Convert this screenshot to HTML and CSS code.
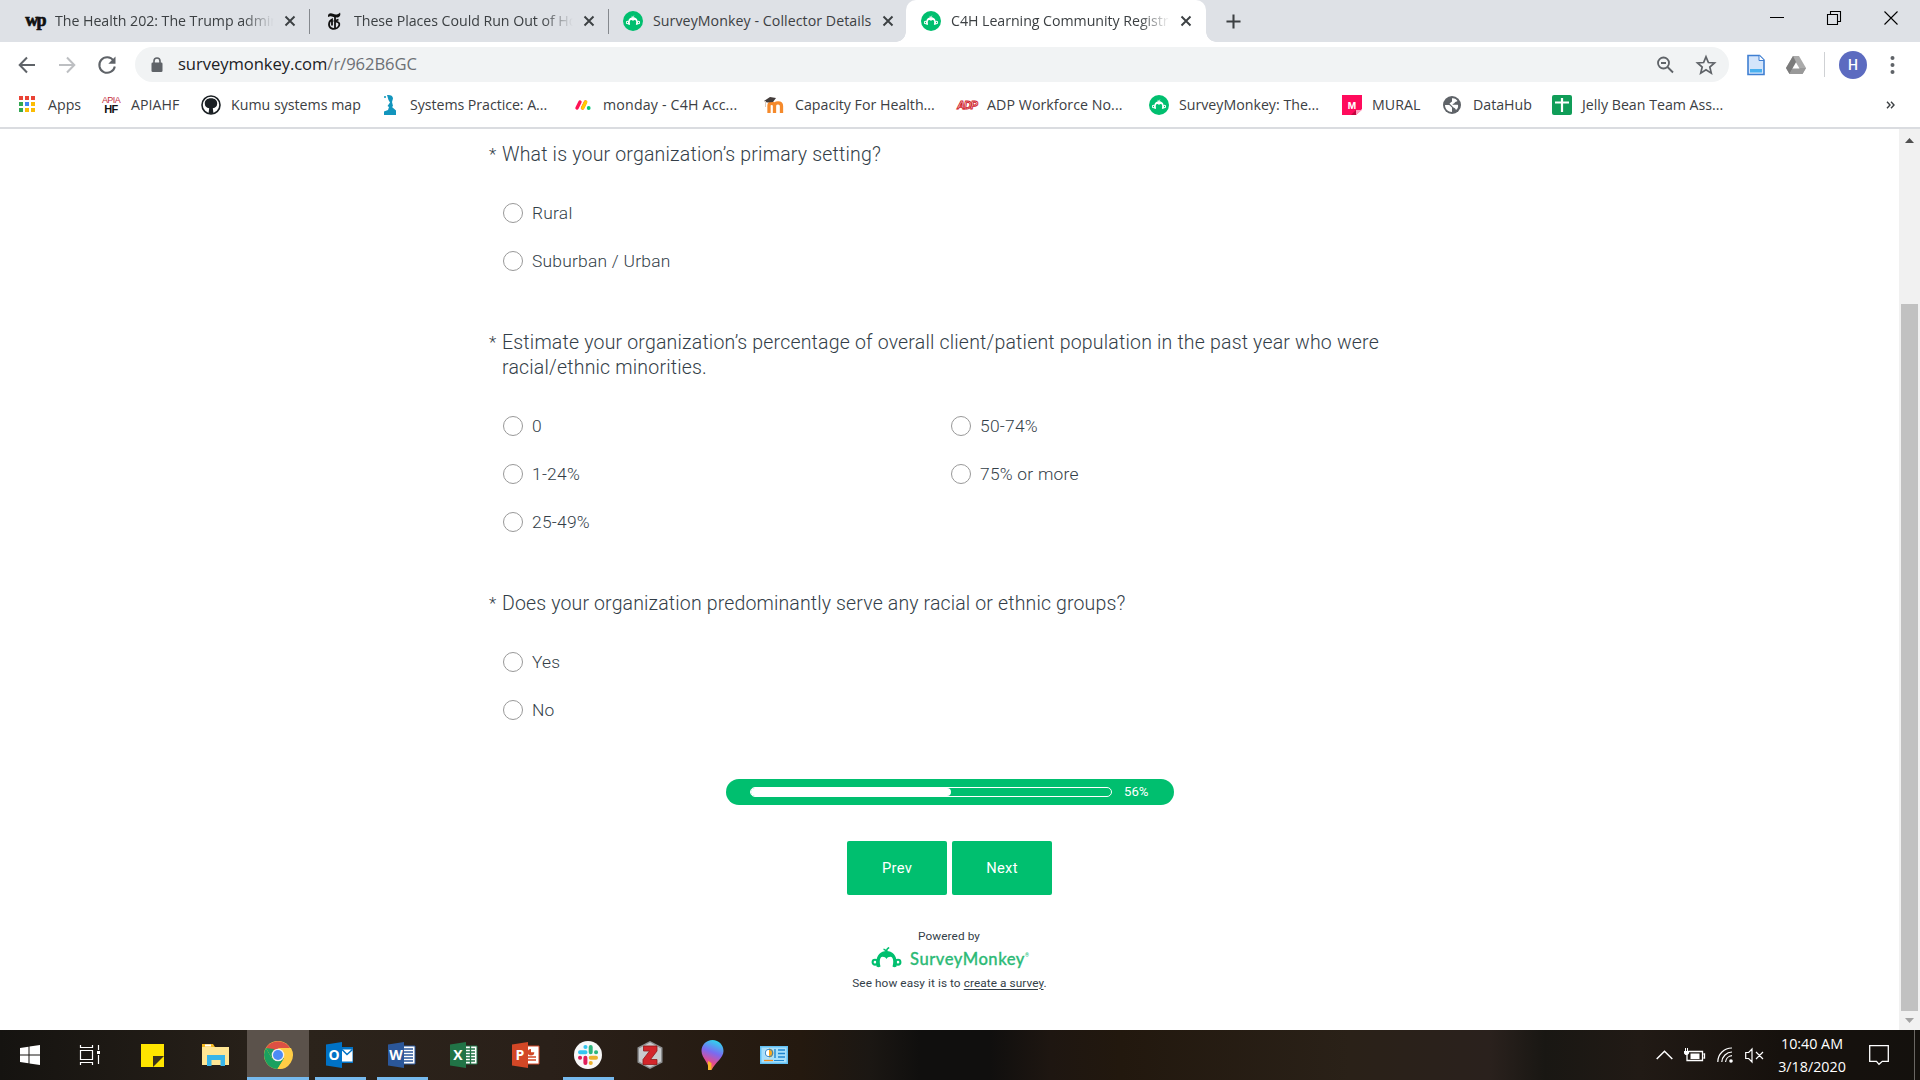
FILE: index.html
```html
<!DOCTYPE html>
<html lang="en">
<head>
<meta charset="utf-8">
<title>C4H Learning Community Registration</title>
<link rel="stylesheet" href="styles.css">
</head>
<body>
<svg class="defs" width="0" height="0">
  <symbol id="monkey" viewBox="0 0 30 21">
    <path fill="currentColor" d="M5 19.5C3.6 9 8.500 4 15 4s11.400 5 10 15.500q-2 1.600-4 0C22.600 14 21.500 9.800 18.800 9.800c-1.800 0-3 .8-3.800 2.200-.8-1.400-2-2.200-3.800-2.200C8.500 9.800 7.400 14 9 19.500q-2 1.600-4 0z"/>
    <path fill="none" stroke="currentColor" stroke-width="1.500" d="M15 5.500c-.3-2-1.300-3-3-3.200M15 5c0-2.200.8-3.700 2.700-4.400"/>
    <circle cx="3.500" cy="15.200" r="2.400" fill="none" stroke="currentColor" stroke-width="2.100"/>
    <circle cx="26.500" cy="15.200" r="2.400" fill="none" stroke="currentColor" stroke-width="2.100"/>
  </symbol>
  <symbol id="sm" viewBox="0 0 20 20"><circle cx="10" cy="10" r="10" fill="#00bf6f"/><svg x="2.800" y="4" width="14.400" height="10.500" viewBox="0 0 30 21" color="#fff"><use href="#monkey"/></svg></symbol>
  <symbol id="close" viewBox="0 0 12 12"><path d="M1.500 1.500l9 9M10.500 1.500l-9 9" stroke="#3c4043" stroke-width="1.900" fill="none"/></symbol>
</svg>

<header class="tabs">
  <div class="tab"><span class="fav wp">wp</span><span class="tab-title">The Health 202: The Trump admin</span><svg class="x"><use href="#close"/></svg></div>
  <div class="tab"><span class="fav nyt"><svg width="14" height="18" viewBox="0 0 14 18"><path d="M1 5C.5 1 4 .6 6 1.800S11 3 13 .5c1.200 3.500-1 5-3 5C7 5.500 4 3.500 2.500 4.500" fill="#111"/><path d="M8 4v12M11.500 7.500L8 9l3.500 1.500c1.500 1 1 4.300-1.500 5.500-4 1.800-8 .3-8-3.500C2 10 3 8.500 5 7.500v6" stroke="#111" stroke-width="1.800" fill="none"/></svg></span><span class="tab-title">These Places Could Run Out of Ho</span><svg class="x"><use href="#close"/></svg></div>
  <div class="tab last"><svg class="fav"><use href="#sm"/></svg><span class="tab-title">SurveyMonkey - Collector Details</span><svg class="x"><use href="#close"/></svg></div>
  <div class="tab active"><svg class="fav"><use href="#sm"/></svg><span class="tab-title">C4H Learning Community Registr</span><svg class="x"><use href="#close"/></svg></div>
  <svg class="plus" viewBox="0 0 16 16"><path d="M8 .5v15M.5 8h15" stroke="#3c4043" stroke-width="2.200"/></svg>
  <div class="winbtns">
    <svg width="14" height="14"><path d="M0 6.500h14" stroke="#000"/></svg>
    <svg width="14" height="14"><path d="M.5 3.500h10v10h-10zM3.500 3V.5h10v10H11" fill="none" stroke="#000" stroke-width="1.100"/></svg>
    <svg width="14" height="14"><path d="M.5.5l13 13M13.500.5l-13 13" stroke="#000" stroke-width="1.100"/></svg>
  </div>
</header>

<nav class="toolbar">
  <svg class="back" width="18" height="18"><path d="M17 9H2M9 1.500L1.700 9 9 16.500" fill="none" stroke="#5f6368" stroke-width="2"/></svg>
  <svg class="fwd" width="18" height="18"><path d="M1 9h15M9 1.500L16.300 9 9 16.500" fill="none" stroke="#bdbfc2" stroke-width="2"/></svg>
  <svg class="reload" width="20" height="20"><path d="M16.500 5.500A7.800 7.800 0 1 0 17.800 11.500" fill="none" stroke="#5f6368" stroke-width="2"/><path d="M18.500 1.500v7.200h-7.200z" fill="#5f6368"/></svg>
  <div class="url">
    <svg class="lock" width="12" height="16"><path d="M3 6V4a3 3 0 0 1 6 0v2" fill="none" stroke="#5f6368" stroke-width="1.600"/><rect x=".5" y="5.500" width="11" height="9.500" rx="1.300" fill="#5f6368"/></svg>
    <span class="address">surveymonkey.com<i>/r/962B6GC</i></span>
    <svg class="mag" width="18" height="18"><circle cx="7.500" cy="7" r="5.500" fill="none" stroke="#5f6368" stroke-width="1.800"/><path d="M5 7h5M11.500 11l5.500 5.500" stroke="#5f6368" stroke-width="1.900"/></svg>
    <svg class="star" width="20" height="20"><path d="M10 1.800l2.400 5.700 6.100.5-4.700 4 1.500 6.100L10 14.800l-5.300 3.300L6.200 12 1.500 8l6.100-.5z" fill="none" stroke="#5f6368" stroke-width="1.700"/></svg>
  </div>
  <svg class="doc" width="18" height="22"><path d="M1 1.500h11.500L17 6v14.500H1z" fill="#d4e5fb" stroke="#3f7fd2" stroke-width="1.600"/><path d="M12 1.500V6.500h5" fill="#fff" stroke="#3f7fd2"/><path d="M3 15h12v3.500H3z" fill="#4ab0ef"/></svg>
  <svg class="drive" width="20" height="18"><path d="M7 0h6l7 12-3.500 6h-13L0 12z" fill="#aaa"/><path d="M7 0L0 12l3.500 6L10 6z" fill="#7b7b7b"/><path d="M6.800 12H20l-3.500 6h-13z" fill="#999"/><path d="M10 6.500L6.500 12.500h7z" fill="#fff"/></svg>
  <span class="sep"></span>
  <span class="avatar">H</span>
  <svg class="dots" width="5" height="20"><circle cx="2.500" cy="3" r="2"/><circle cx="2.500" cy="10" r="2"/><circle cx="2.500" cy="17" r="2"/></svg>
</nav>

<nav class="bookmarks">
  <a class="b1"><svg class="apps" width="17" height="17"><path fill="#ea4335" d="M0 0h4v4H0zM6 0h4v4H6zM12 0h4v4h-4z"/><path fill="#34a853" d="M0 6h4v4H0zM0 12h4v4H0z"/><path fill="#4285f4" d="M6 6h4v4H6z"/><path fill="#fbbc04" d="M12 6h4v4h-4zM6 12h4v4H6zM12 12h4v4h-4z"/></svg>Apps</a>
  <a class="b2"><span class="apia"><em>APIA</em><b>HF</b></span>APIAHF</a>
  <a class="b3"><svg width="20" height="20"><circle cx="10" cy="10" r="9" fill="#fff" stroke="#1b2024" stroke-width="1.600"/><path d="M10 3.300c4 0 6.200 2.200 6.200 5.200 0 2.800-1.700 4.500-4.400 4.800l.7 5.500h-5l.7-5.500C5.500 13 3.800 11.300 3.800 8.500c0-3 2.200-5.200 6.200-5.200z" fill="#1b2024"/></svg>Kumu systems map</a>
  <a class="b4"><svg width="14" height="20"><path d="M4 0c3-.5 6 .5 6 3.500L9 7l1 4-1 1 4 3.500V20H1v-3.500L5 15l1-3-1.500-1L7 7.500 5.500 5z" fill="#1295bd"/><path d="M1 1h2v2H1z" fill="#46b0cd"/></svg>Systems Practice: A...</a>
  <a class="b5"><svg width="16" height="12"><path d="M2 9L5 3M7.500 9l3-6" stroke-width="3.400" stroke-linecap="round" stroke="#ff1255"/><path d="M7.700 9l3-6" stroke-width="3.400" stroke-linecap="round" stroke="#ffcb00"/><circle cx="13.700" cy="9" r="1.900" fill="#00c875"/></svg>monday - C4H Acc...</a>
  <a class="b6"><svg width="21" height="18"><path d="M5 17V9.500c0-3 5-3 5.500 0V17M10.500 17V9.500c.5-3.500 7-3.500 7 .5v7" fill="none" stroke="#f58a2c" stroke-width="3.300"/><path d="M0 5l6-4 6 1-3 4-6 .5z" fill="#433c3b"/><path d="M1.500 5v6" stroke="#d8c8bc"/></svg>Capacity For Health...</a>
  <a class="b7"><span class="adp">ADP</span>ADP Workforce No...</a>
  <a class="b8"><svg width="20" height="20"><use href="#sm"/></svg>SurveyMonkey: The...</a>
  <a class="b9"><svg width="20" height="20"><path d="M0 0h20v14l-6 6H0z" fill="#ff0b5c"/><path d="M14 20v-5h6z" fill="#ff9cbe"/><path d="M9 20l5-5v5z" fill="#c1053f"/><text x="10" y="14" text-anchor="middle" class="mural">M</text></svg>MURAL</a>
  <a class="b10"><svg width="18" height="18"><circle cx="9" cy="9" r="9" fill="#5f6368"/><path d="M2 9h4c1.500.5 2 2 3 2.500V16C5 16 2 13 2 9zM9 2.200c2.500-.3 4.500 1 5.500 2.800-1 1-2.500.5-3 2-.5 1-2 .5-2 1.500 1.500 1 4-.5 5.500.5.500 2-.5 4-2 5-.5-1-1-2-2.500-2.500L8 9 6.500 7.500 9 5.500z" fill="#fff"/></svg>DataHub</a>
  <a class="b11"><svg width="20" height="20"><rect width="20" height="20" rx="2" fill="#109d58"/><path d="M10 3v14M3 7.500h14" stroke="#fff" stroke-width="2.200"/></svg>Jelly Bean Team Ass...</a>
  <a class="more"><svg width="9" height="8"><path d="M1 .8L4 4 1 7.200M5 .8L8 4 5 7.200" fill="none" stroke="#3c4043" stroke-width="1.400"/></svg></a>
</nav>

<main class="view">
  <form class="survey">
    <section class="q q1">
      <h2><span class="req">*</span>What is your organization’s primary setting?</h2>
      <div class="opts"><label><span class="radio"></span>Rural</label><label><span class="radio"></span>Suburban / Urban</label></div>
    </section>
    <section class="q q2">
      <h2><span class="req">*</span>Estimate your organization’s percentage of overall client/patient population in the past year who were<br>racial/ethnic minorities.</h2>
      <div class="cols">
        <div class="opts"><label><span class="radio"></span>0</label><label><span class="radio"></span>1-24%</label><label><span class="radio"></span>25-49%</label></div>
        <div class="opts"><label><span class="radio"></span>50-74%</label><label><span class="radio"></span>75% or more</label></div>
      </div>
    </section>
    <section class="q q3">
      <h2><span class="req">*</span>Does your organization predominantly serve any racial or ethnic groups?</h2>
      <div class="opts"><label><span class="radio"></span>Yes</label><label><span class="radio"></span>No</label></div>
    </section>
    <div class="progress"><span class="track"><span class="fill" style="width:56%"></span></span><span class="pct">56%</span></div>
    <div class="buttons"><span class="btn">Prev</span><span class="btn">Next</span></div>
    <footer class="powered">
      <div class="pw">Powered by</div>
      <div class="logo"><svg width="31" height="21"><use href="#monkey"/></svg><span>SurveyMonkey</span><sup>®</sup></div>
      <div class="see">See how easy it is to <u>create a survey</u>.</div>
    </footer>
  </form>
  <aside class="scroll"><svg width="9" height="5"><path d="M0 5L4.500 0 9 5z" fill="#505050"/></svg><span class="thumb"></span><svg width="9" height="5"><path d="M0 0l4.500 5L9 0z" fill="#a3a3a3"/></svg></aside>
</main>

<footer class="taskbar">
  <div class="task"><svg width="20" height="20"><path fill="#fff" d="M0 3l8.500-1.300v7.800H0zM9.500 1.500L20 0v9.500H9.500zM0 10.500h8.500v7.800L0 17zM9.500 10.500H20V20L9.500 18.500z"/></svg></div>
  <div class="task"><svg width="20" height="20"><path d="M.5 5.500h12v9H.5zM.5 0v2.500h12V0M.5 20v-2.500h12V20M18.500 0v5M18.500 10v9" fill="none" stroke="#fff" stroke-width="1.200"/><path d="M17 6h3v3h-3z" fill="#fff"/></svg></div>
  <div class="task wide"><svg width="23" height="23"><path fill="#ffe500" d="M0 0h23v23H0z"/><path d="M12 23V12h11v11z" fill="#2b2418"/><path d="M12 23V12h11z" fill="#3a321c"/><path d="M23 12v11H12z" fill="#ffe500"/></svg></div>
  <div class="task"><svg width="28" height="24"><path d="M0 1h11l2 3H0z" fill="#f5b921"/><path d="M0 4h27v18H0z" fill="#ffe694"/><path d="M3 1.500h6v2H3z" fill="#fff"/><path d="M5 23V12h18v11h-4.500v-6h-9v6z" fill="#38b5e9"/></svg></div>
  <div class="task on"><svg width="28" height="28" viewBox="0 0 28 28"><circle cx="14" cy="14" r="14" fill="#ffcd46"/><path d="M14 14L2 7A14 14 0 0 1 26 7H14z" fill="#dd5144"/><path d="M1.900 7A14 14 0 0 0 13.500 28L20 17.500 14 14 8 17.500z" fill="#1aa15f"/><path d="M1.900 7L8 17.500 10 8z" fill="#1aa15f"/><path d="M10 7h16l-6 6z" fill="#dd5144"/><path d="M14 7h13a14 14 0 0 1-13.500 21L20 17.500z" fill="#ffcd46"/><circle cx="14" cy="14" r="6.300" fill="#f1f1f1"/><circle cx="14" cy="14" r="5" fill="#4c8bf5"/></svg></div>
  <div class="task run"><svg width="28" height="28"><path d="M15 6h12v16H15z" fill="#0072c6"/><path d="M16 8.500h10.500v12H16z" fill="#fff"/><path d="M16 8.500l5 5 5.500-5" fill="none" stroke="#0072c6" stroke-width="1.500"/><path d="M0 3.500L16 1v26L0 24.500z" fill="#0072c6"/><text x="8" y="19" class="ol">O</text></svg></div>
  <div class="task run"><svg width="28" height="28"><path d="M15 5h12v18H15z" fill="#fff" stroke="#2b579a"/><path d="M16 8h9M16 11h9M16 14h9M16 17h9M16 20h9" stroke="#2b579a" stroke-width="1.300"/><path d="M0 3.500L16 1v26L0 24.500z" fill="#2b579a"/><text x="8" y="19" class="ol">W</text></svg></div>
  <div class="task"><svg width="28" height="28"><path d="M15 5h12v18H15z" fill="#fff" stroke="#217346"/><path d="M16 8h9M16 11h9M16 14h9M16 17h9M16 20h9M20.500 5v18" stroke="#217346" stroke-width="1.300"/><path d="M0 3.500L16 1v26L0 24.500z" fill="#217346"/><text x="8" y="19" class="ol">X</text></svg></div>
  <div class="task"><svg width="28" height="28"><path d="M15 5h12v18H15z" fill="#fff" stroke="#d24726"/><path d="M16 16h8M16 19h8" stroke="#d24726" stroke-width="1.400"/><path d="M19 8a3.300 3.300 0 1 0 3.300 3.300H19z" fill="#d24726"/><path d="M0 3.500L16 1v26L0 24.500z" fill="#d24726"/><text x="8" y="19" class="ol">P</text></svg></div>
  <div class="task run"><svg width="28" height="28"><circle cx="14" cy="14" r="14" fill="#f8f8f8"/><g stroke-width="4" stroke-linecap="round"><path d="M6 11.300h5.500M11.400 6h.1" stroke="#36c5f0"/><path d="M16.700 6v5.300M22 11.300h.1" stroke="#2eb67d"/><path d="M22 16.700h-5.300M16.700 22h.1" stroke="#ecb22e"/><path d="M11.400 22v-5.300M6 16.700h.1" stroke="#e01e5a"/></g></svg></div>
  <div class="task"><svg width="26" height="28"><path d="M13 0l12.500 6.500v15L13 28 .5 21.500v-15z" fill="#8e9092"/><path d="M13 1.500l11 6v13L13 26.500 2 20.500v-13z" fill="#c9cbcd"/><path d="M6.500 5h13.500v5l-6.500 8.500H20V23.500H6V18.500L12.500 10h-6z" fill="#d3262b" stroke="#8f1a16" stroke-width=".8"/></svg></div>
  <div class="task"><svg width="23" height="30"><defs><linearGradient id="p" x1=".6" y1="0" x2=".3" y2="1"><stop offset="0" stop-color="#2fd4ee"/><stop offset=".4" stop-color="#7a6bf0"/><stop offset=".75" stop-color="#e84a8c"/><stop offset="1" stop-color="#f7a02c"/></linearGradient></defs><path d="M11.500 0C18 0 22.500 5 22.500 11c0 7-8 11-12 19h-3c1-7-7-12-7-19 0-6 4.500-11 11-11z" fill="url(#p)"/><path d="M7 21l3.500 2-.5 7H7z" fill="#f7b52c"/></svg></div>
  <div class="task"><svg width="28" height="18"><path fill="#62c1f5" d="M0 0h28v18H0z"/><path fill="#a8e0fc" d="M1.500 1.500h25v15h-25z"/><circle cx="9" cy="7" r="4.500" fill="#fff"/><path d="M9 7V2.500A4.500 4.500 0 0 1 9 11.500z" fill="#f6a821"/><circle cx="9" cy="7" r="3.800" fill="none" stroke="#2480c8"/><path d="M18 4h7M18 7.500h7M18 11h7M15 3v9" stroke="#1f86d1" stroke-width="1.400"/><path d="M4 14.500h9" stroke="#f38b1c" stroke-width="1.300"/><path d="M14 14.500h10" stroke="#1f86d1"/></svg></div>
  <div class="tray">
    <svg width="17" height="10"><path d="M.7 9L8.500 1.200 16.300 9" fill="none" stroke="#fff" stroke-width="1.500"/></svg>
    <svg width="21" height="15"><path d="M5 4V3.500h13.500v9H3V7M19.500 6h1v4h-1" fill="none" stroke="#fff" stroke-width="1.300"/><path d="M6.500 5.500H15.500v5.500h-9zM0 3h5v2.500L3.500 7h-2L0 5.500zM1 0h1v3H1zM3 0h1v3H3z" fill="#fff"/></svg>
    <svg width="17" height="16"><g fill="none" stroke="#fff" stroke-width="1.200"><path d="M.8 15A14 14 0 0 1 15 1M4.800 15A10.500 10.500 0 0 1 15 5M8.500 15A7 7 0 0 1 15 8.700"/></g><circle cx="14" cy="14" r="1.800" fill="#fff"/></svg>
    <svg width="19" height="15"><path d="M.7 4.500h3L7 1v13l-3.300-3.500h-3zM11 4l7 7M18 4l-7 7" fill="none" stroke="#fff" stroke-width="1.200"/></svg>
    <div class="clock"><span>10:40 AM</span><span>3/18/2020</span></div>
    <svg width="20" height="20"><path d="M.7.7h18.600v15.600h-6L10 19.300l-2.500-3H.7z" fill="none" stroke="#fff" stroke-width="1.300"/></svg>
    <span class="peek"></span>
  </div>
</footer>
</body>
</html>
```
FILE: styles.css
```css
*{box-sizing:border-box}
body{margin:0;width:1920px;height:1080px;overflow:hidden;background:#fff;display:flex;flex-direction:column;font-family:"Open Sans","Noto Sans",sans-serif;font-size:14.2px;color:#3c4043}
svg{display:block;flex:none;overflow:visible}
.defs{position:absolute}
/* tab strip */
.tabs{height:42px;background:#dee1e6;display:flex;align-items:center;padding-left:10px;flex:none}
.tab{width:299px;height:42px;display:flex;align-items:center;padding:0 0 0 15px;position:relative;white-space:nowrap}
.tab::after{content:"";position:absolute;right:-1px;top:9px;width:1px;height:25px;background:#84888d}
.tab.last{width:298px}
.tab.last::after{display:none}
.fav{width:20px;height:20px;margin-right:10px;flex:none;display:flex;align-items:center;justify-content:center}
.wp{font:bold 18px "Liberation Serif",serif;letter-spacing:-1.8px;color:#111;-webkit-text-stroke:.7px #111;padding-bottom:2px}
.tab-title{width:219px;padding-bottom:2px;letter-spacing:-.04px;-webkit-mask-image:linear-gradient(90deg,#000 188px,transparent 219px)}
.last .tab-title{-webkit-mask-image:none;letter-spacing:.06px;width:221px}
.x{width:12px;height:12px;margin-left:10px}
.last .x{margin-left:8px}
.active{width:300px;background:#fff;border-radius:10px 10px 0 0}
.active::after,.active::before{content:"";position:absolute;width:10px;height:10px;top:32px;left:-10px;background:radial-gradient(circle at 0 0,transparent 9.500px,#fff 10px)}
.active::after{left:auto;right:-10px;background:radial-gradient(circle at 100% 0,transparent 9.500px,#fff 10px)}
.plus{width:15px;height:15px;margin-left:20px}
.winbtns{display:flex;gap:43px;margin-left:auto;margin-right:22px;margin-bottom:6px}
/* toolbar */
.toolbar{height:45px;display:flex;align-items:center;padding-left:18px;flex:none}
.fwd{margin-left:22px}
.reload{margin:0 18px 0 21px}
.url{width:1594px;height:35px;border-radius:18px;background:#f1f3f4;display:flex;align-items:center;margin:0;padding:0 13px 0 16px}
.address{font-size:16.6px;letter-spacing:-.06px;margin-left:15px;color:#202124;margin-right:auto;margin-bottom:2px}
.address i{font-style:normal;color:#6c7075}
.mag{margin-right:22px}
.doc{margin-left:18px}
.drive{margin-left:21px}
.sep{width:1px;height:25px;background:#cfd1d4;margin-left:18px}
.avatar{width:28px;height:28px;border-radius:50%;background:#5c6bc0;color:#fff;margin-left:14px;font:500 14px Roboto,sans-serif;display:flex;align-items:center;justify-content:center}
.dots{margin-left:23px;fill:#5f6368}
/* bookmarks */
.bookmarks{height:42px;border-bottom:2px solid #dadce0;display:flex;align-items:center;padding:0 0 5px 19px;flex:none}
.bookmarks a{display:flex;align-items:center;gap:10px;white-space:nowrap;flex:none}
.b1{width:82px}.bookmarks .b1{gap:12px}.b2{width:100px}.b3{width:182px}.b4{width:192px}.b5{width:189px}.b6{width:193px}.b7{width:192px}.b8{width:193px}.b9{width:101px}.b10{width:109px}.b11{width:200px}
.bookmarks .b4{gap:13px;letter-spacing:-.05px}.bookmarks .b5{gap:12px;letter-spacing:.18px}
.b7,.b9{letter-spacing:.06px}
.bookmarks .b10{gap:12px}
.more{margin-left:134px}
.apia{width:20px;display:flex;flex-direction:column;align-items:center;font:9px/9px "Liberation Sans",sans-serif;letter-spacing:-.6px}
.apia em{font-style:normal;color:#c22d3c}
.apia b{font-size:11px;color:#111}
.adp{width:20px;font:italic bold 11px "Liberation Sans",sans-serif;letter-spacing:-1.2px;color:#fff;-webkit-text-stroke:.9px #d0202a}
.mural{font:bold 9px Inter,sans-serif;fill:#fff}
/* survey */
.view{flex:1;display:flex;min-height:0}
.survey{width:1899px;padding:11px 0 0 502px;color:#333e48;font-family:Roboto,sans-serif;font-weight:300}
.q h2{margin:0;font-size:19.5px;font-weight:300;line-height:25px;letter-spacing:.19px;white-space:nowrap;position:relative}
.req{position:absolute;left:-13px;top:0;font-size:17px}
.opts{display:flex;flex-direction:column;gap:28px;width:448px;padding-left:1px}
.opts label{display:flex;align-items:center;gap:9px;height:20px;font-size:17.4px;letter-spacing:.24px}
.radio{width:20px;height:20px;border:1px solid #999;border-radius:50%}
.q1 h2{height:63px;padding-top:2px}
.q1 .req{top:2px}
.q1{height:189px}
.q2 h2{height:86px}
.q2{height:262px;padding-top:1px}
.q3 h2{height:61px;letter-spacing:.15px}
.q3{height:188px}
.cols{display:flex}
.progress{width:448px;height:26px;margin-left:224px;border-radius:13px;background:#00bf6f;display:flex;align-items:center;padding-left:24px;color:#fff}
.track{width:362px;height:10px;border:1px solid #fff;border-radius:5px;overflow:hidden;padding-right:3px}
.fill{display:block;height:8px;background:#fff;border-radius:0 4px 4px 0}
.pct{font-size:13.2px;font-weight:400;margin:0 0 1px 12px}
.buttons{display:flex;gap:5px;margin:36px 0 0 345px}
.btn{width:100px;height:54px;border-radius:2px;background:#00bf6f;color:#fff;font-size:14.7px;font-weight:400;letter-spacing:.3px;display:flex;align-items:center;justify-content:center}
.powered{width:448px;margin:34px 0 0 224px;font-size:11.8px;font-weight:400;letter-spacing:.08px;display:flex;flex-direction:column;align-items:center}
.pw{line-height:14px;margin-right:2px}
.logo{display:flex;align-items:flex-start;color:#00bf6f;height:31px;padding-top:4px}
.logo svg{margin-right:8px}
.logo span{font:500 16.6px/24px Lato,sans-serif;-webkit-text-stroke:.3px #2dba76;color:#2dba76;letter-spacing:.5px}
.logo sup{font-size:5px;line-height:16px}
.see{line-height:18px;margin-right:1px}
.see u{text-underline-offset:2px}
.scroll{width:21px;background:#f1f1f1;display:flex;flex-direction:column;align-items:center;padding:9px 0 7px}
.thumb{width:17px;height:707px;background:#c1c1c1;margin:161px 0 auto}
/* taskbar */
.taskbar{height:50px;flex:none;display:flex;background:linear-gradient(90deg,#151310 0,#2b231b 300px,#2a2019 550px,#24190f 800px,#1b1713 870px,#100f0e 920px,#100f0e 990px,#1e1611 1050px,#22180e 1120px,#2a2118 1350px,#2a211d 1490px,#191713 1545px,#211a15 1640px,#16110d 1780px,#14110d)}
.task{width:62px;display:flex;align-items:center;justify-content:center;position:relative}
.task:first-child,.task:nth-child(2){width:60px}
.task.wide{width:65px}
.on{background:#5b524b}
.on::after,.run::after{content:"";position:absolute;bottom:0;left:0;width:100%;height:3px;background:#76b9ed}
.run::after{left:6px;width:51px}
.ol{font:bold 14px "Open Sans",sans-serif;fill:#fff;text-anchor:middle}
.tray{margin-left:auto;display:flex;align-items:center}
.tray>svg:nth-child(1){margin-right:11px}
.tray>svg:nth-child(2){margin-right:12px}
.tray>svg:nth-child(3){margin-right:11px}
.clock{width:100px;color:#fff;display:flex;flex-direction:column;align-items:center;line-height:23px;font-size:14.3px;margin:0 7px 1px -2px}
.peek{width:1px;height:50px;background:#6a6763;margin:0 5px 0 25px}
```
